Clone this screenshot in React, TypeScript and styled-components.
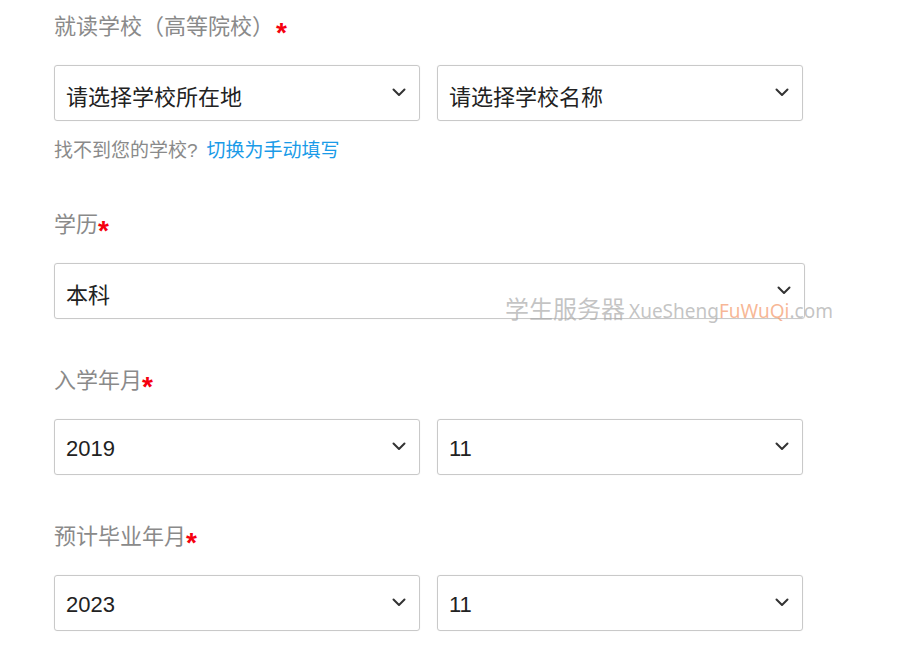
import styled, { createGlobalStyle } from 'styled-components'

const GlobalStyle = createGlobalStyle`
  body {
    margin: 0;
    background: #fff;
    font-family: "Liberation Sans", "Noto Sans CJK SC", sans-serif;
  }
`

const Page = styled.div`
  position: relative;
  padding: 12px 0 0 54px;
  width: 900px;
  height: 649px;
  box-sizing: border-box;
  overflow: hidden;
`

const Field = styled.div`
  margin-bottom: 47px;
`

const Label = styled.div`
  height: 30px;
  line-height: 30px;
  font-size: 22px;
  color: #8a8a8a;
  margin-bottom: 23px;
  white-space: nowrap;
`

const Star = styled.span<{ $gap?: number }>`
  color: #f5000f;
  font-size: 28px;
  font-weight: bold;
  vertical-align: -8px;
  margin-left: ${({ $gap }) => $gap ?? 0}px;
`

const Row = styled.div<{ $cols: number }>`
  display: grid;
  grid-template-columns: ${({ $cols }) =>
    $cols === 2 ? '366px 366px' : '751px'};
  column-gap: 17px;
`

const SelectBox = styled.div`
  height: 56px;
  box-sizing: border-box;
  border: 1px solid #c9c9c9;
  border-radius: 3px;
  box-shadow: 0 0 1px rgba(0, 0, 0, 0.12);
  display: flex;
  align-items: center;
  padding: 3px 0 0 11px;
  font-size: 22px;
  color: #222;
`

const Value = styled.span`
  flex: 1;
`

const Chevron = styled.svg`
  width: 14px;
  height: 9px;
  margin-right: 13px;
  margin-top: -5px;
`

const Helper = styled.div`
  margin-top: 18px;
  height: 24px;
  line-height: 24px;
  font-size: 19px;
  color: #8a8a8a;
`

const Link = styled.a`
  color: #1a9be8;
  margin-left: 9px;
  text-decoration: none;
`

const Watermark = styled.div`
  position: absolute;
  left: 505px;
  top: 290px;
  white-space: nowrap;
  color: rgba(170, 170, 170, 0.7);
  font-family: "Noto Sans", "Noto Sans CJK SC", sans-serif;
  font-size: 19px;
  line-height: 36px;
`

const WmCn = styled.span`
  font-family: "Noto Sans CJK SC", sans-serif;
  font-size: 24px;
  margin-right: 4px;
`

const WmAccent = styled.span`
  color: rgba(245, 160, 115, 0.75);
`

type SelectProps = { value: string }

const Select = ({ value }: SelectProps) => (
  <SelectBox>
    <Value>{value}</Value>
    <Chevron viewBox="0 0 14 9" fill="none">
      <path
        d="M1.5 1.5 L7 7 L12.5 1.5"
        stroke="#333"
        strokeWidth="2"
        strokeLinecap="round"
        strokeLinejoin="round"
      />
    </Chevron>
  </SelectBox>
)

export default function App() {
  return (
    <Page>
      <GlobalStyle />
      <Field>
        <Label>
          就读学校（高等院校）<Star $gap={2}>*</Star>
        </Label>
        <Row $cols={2}>
          <Select value="请选择学校所在地" />
          <Select value="请选择学校名称" />
        </Row>
        <Helper>
          找不到您的学校?<Link>切换为手动填写</Link>
        </Helper>
      </Field>
      <Field>
        <Label>
          学历<Star>*</Star>
        </Label>
        <Row $cols={1}>
          <Select value="本科" />
        </Row>
      </Field>
      <Field>
        <Label>
          入学年月<Star>*</Star>
        </Label>
        <Row $cols={2}>
          <Select value="2019" />
          <Select value="11" />
        </Row>
      </Field>
      <Field>
        <Label>
          预计毕业年月<Star>*</Star>
        </Label>
        <Row $cols={2}>
          <Select value="2023" />
          <Select value="11" />
        </Row>
      </Field>
      <Watermark>
        <WmCn>学生服务器</WmCn>XueSheng<WmAccent>FuWuQi</WmAccent>.com
      </Watermark>
    </Page>
  )
}
